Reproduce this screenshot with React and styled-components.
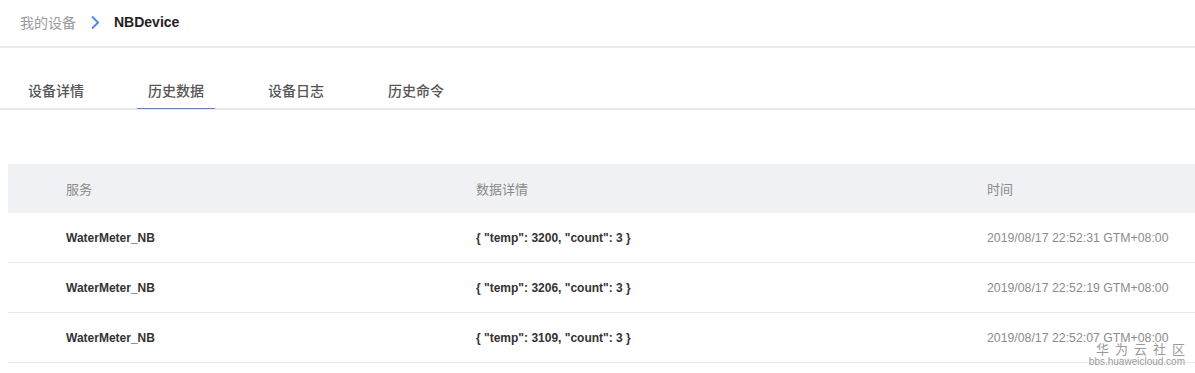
import React from 'react'
import styled, { createGlobalStyle } from 'styled-components'

const GlobalStyle = createGlobalStyle`
  html, body {
    margin: 0;
    padding: 0;
    background: #ffffff;
  }
  body {
    font-family: 'Liberation Sans', 'Noto Sans CJK SC', Arial, sans-serif;
  }
`

const Page = styled.main`
  position: relative;
  width: 1195px;
  height: 373px;
  overflow: hidden;
  background: #ffffff;
`

const Breadcrumb = styled.nav`
  display: flex;
  align-items: center;
  padding: 0 0 2px 20px;
  border-bottom: 2px solid #ececec;
  box-sizing: border-box;
  height: 48px;
  gap: 14px;

  .crumb {
    font-family: 'Noto Sans CJK SC', sans-serif;
    font-size: 14px;
    color: #9a9a9a;
  }

  .current {
    font-family: 'Liberation Sans', Arial, sans-serif;
    font-size: 14px;
    font-weight: 700;
    color: #222;
  }
`

const Chevron = () => (
  <svg width="10" height="15" viewBox="0 0 10 15" fill="none">
    <polyline points="2,1.5 8,7.5 2,13.5" stroke="#4a8ee2" strokeWidth="2" strokeLinejoin="miter" />
  </svg>
)

const TabBar = styled.div`
  display: flex;
  gap: 42px;
  padding: 0 0 0 17px;
  margin-top: 32px;
  border-bottom: 2px solid #e8e8e8;
`

const Tab = styled.div`
  width: 78px;
  text-align: center;
  font-family: 'Noto Sans CJK SC', sans-serif;
  font-size: 14px;
  font-weight: 500;
  color: #555;
  line-height: 20px;
  padding-bottom: 8px;
  margin-bottom: -1px;
  border-bottom: 1px solid ${p => (p.$active ? '#5b7fe2' : 'transparent')};
`

const Table = styled.div`
  margin: 54px 0 0 8px;
`

const Row = styled.div`
  display: grid;
  grid-template-columns: 410px 511px 1fr;
  align-items: center;
  height: ${p => (p.$head ? '49px' : '50px')};
  background: ${p => (p.$head ? '#f0f1f4' : '#fff')};
  border-bottom: ${p => (p.$head ? 'none' : '1px solid #e9e9e9')};
  box-sizing: border-box;
`

const HeadCell = styled.div`
  padding-left: 58px;
  font-family: 'Noto Sans CJK SC', sans-serif;
  font-size: 13px;
  color: #8a8a8a;
`

const Cell = styled.div`
  padding-left: 58px;
  font-family: 'Liberation Sans', Arial, sans-serif;
  font-size: ${p => (p.$muted ? '12.3px' : '12px')};
  font-weight: ${p => (p.$muted ? 400 : 700)};
  color: ${p => (p.$muted ? '#8c8c8c' : '#333')};
  white-space: nowrap;
`

const Watermark = styled.div`
  position: absolute;
  right: 10px;
  bottom: 5px;
  display: flex;
  flex-direction: column;
  align-items: flex-end;
  color: #9a9a9a;

  .cn {
    font-family: 'Noto Sans CJK SC', sans-serif;
    font-size: 13px;
    letter-spacing: 6px;
    line-height: 15px;
    margin-right: -6px;
  }

  .en {
    font-family: 'Liberation Sans', Arial, sans-serif;
    font-size: 10px;
    line-height: 12px;
  }
`

const rows = [
  { service: 'WaterMeter_NB', data: '{ "temp": 3200, "count": 3 }', time: '2019/08/17 22:52:31 GTM+08:00' },
  { service: 'WaterMeter_NB', data: '{ "temp": 3206, "count": 3 }', time: '2019/08/17 22:52:19 GTM+08:00' },
  { service: 'WaterMeter_NB', data: '{ "temp": 3109, "count": 3 }', time: '2019/08/17 22:52:07 GTM+08:00' },
]

const tabs = ['设备详情', '历史数据', '设备日志', '历史命令']

const App = () => {
  return (
    <>
      <GlobalStyle />
      <Page>
        <Breadcrumb>
          <span className="crumb">我的设备</span>
          <Chevron />
          <span className="current">NBDevice</span>
        </Breadcrumb>

        <TabBar>
          {tabs.map(t => (
            <Tab key={t} $active={t === '历史数据'}>{t}</Tab>
          ))}
        </TabBar>

        <Table>
          <Row $head>
            <HeadCell>服务</HeadCell>
            <HeadCell>数据详情</HeadCell>
            <HeadCell>时间</HeadCell>
          </Row>
          {rows.map((r, i) => (
            <Row key={i}>
              <Cell>{r.service}</Cell>
              <Cell>{r.data}</Cell>
              <Cell $muted>{r.time}</Cell>
            </Row>
          ))}
        </Table>

        <Watermark>
          <span className="cn">华为云社区</span>
          <span className="en">bbs.huaweicloud.com</span>
        </Watermark>
      </Page>
    </>
  )
}

export default App
